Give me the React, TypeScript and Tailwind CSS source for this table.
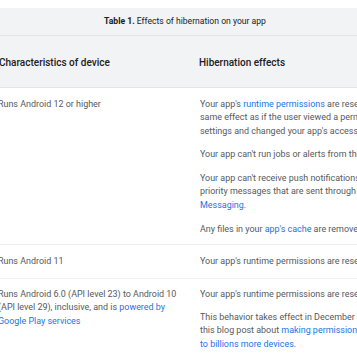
import React from "react";

const L = ({ children }: { children: React.ReactNode }) => (
  <span className="text-[#1a73e8]">{children}</span>
);

export default function App() {
  return (
    <div
      className="w-[357px] h-[357px] overflow-hidden bg-white"
      style={{ fontFamily: "Roboto, 'Liberation Sans', sans-serif" }}
    >
      <div className="ml-[-10px] w-[390px] pt-[8px]">
        <div className="h-[28px] bg-[#f1f3f4] border-b border-[#e3e5e8] flex items-center justify-center text-[8.6px] text-[#202124] whitespace-nowrap">
          <span className="font-bold">Table 1.</span>&nbsp;Effects of hibernation on your app
        </div>
        <div className="h-[52px] bg-[#f1f3f4] border-b border-[#e3e5e8] flex items-center pt-[1px] text-[10px] font-medium text-[#202124] whitespace-nowrap">
          <div className="w-[200px] shrink-0 pl-[9px]">Characteristics of device</div>
          <div className="pl-[9px]">Hibernation effects</div>
        </div>
        <div className="text-[8.95px] leading-[13.3px] text-[#55595e] whitespace-nowrap">
          <div className="flex border-b border-[#eceef0] pt-[10px] pb-[8px]">
            <div className="w-[200px] shrink-0 pl-[8px]">Runs Android 12 or higher</div>
            <div className="pl-[10px] flex flex-col gap-[10.5px]">
              <p>
                Your app's <L>runtime permissions</L> are reset. This has the
                <br />
                same effect as if the user viewed a permission in system
                <br />
                settings and changed your app's access level to Deny.
              </p>
              <p>Your app can't run jobs or alerts from the background.</p>
              <p>
                Your app can't receive push notifications, including high-
                <br />
                priority messages that are sent through Firebase Cloud
                <br />
                <L>Messaging</L>.
              </p>
              <p>
                Any files in your <L>app's cache</L> are removed.
              </p>
            </div>
          </div>
          <div className="flex border-b border-[#eceef0] pt-[10px] pb-[10px]">
            <div className="w-[200px] shrink-0 pl-[8px]">Runs Android 11</div>
            <div className="pl-[10px]">Your app's runtime permissions are reset.</div>
          </div>
          <div className="flex pt-[9px] pb-[10px]">
            <div className="w-[200px] shrink-0 pl-[8px]">
              Runs Android 6.0 (API level 23) to Android 10
              <br />
              (API level 29), inclusive, and is <L>powered by</L>
              <br />
              <L>Google Play services</L>
            </div>
            <div className="pl-[10px] flex flex-col gap-[9.5px]">
              <p>Your app's runtime permissions are reset.</p>
              <p>
                This behavior takes effect in December 2021. To learn more, see
                <br />
                this blog post about <L>making permission auto-reset available</L>
                <br />
                <L>to billions more devices</L>.
              </p>
            </div>
          </div>
        </div>
      </div>
    </div>
  );
}
